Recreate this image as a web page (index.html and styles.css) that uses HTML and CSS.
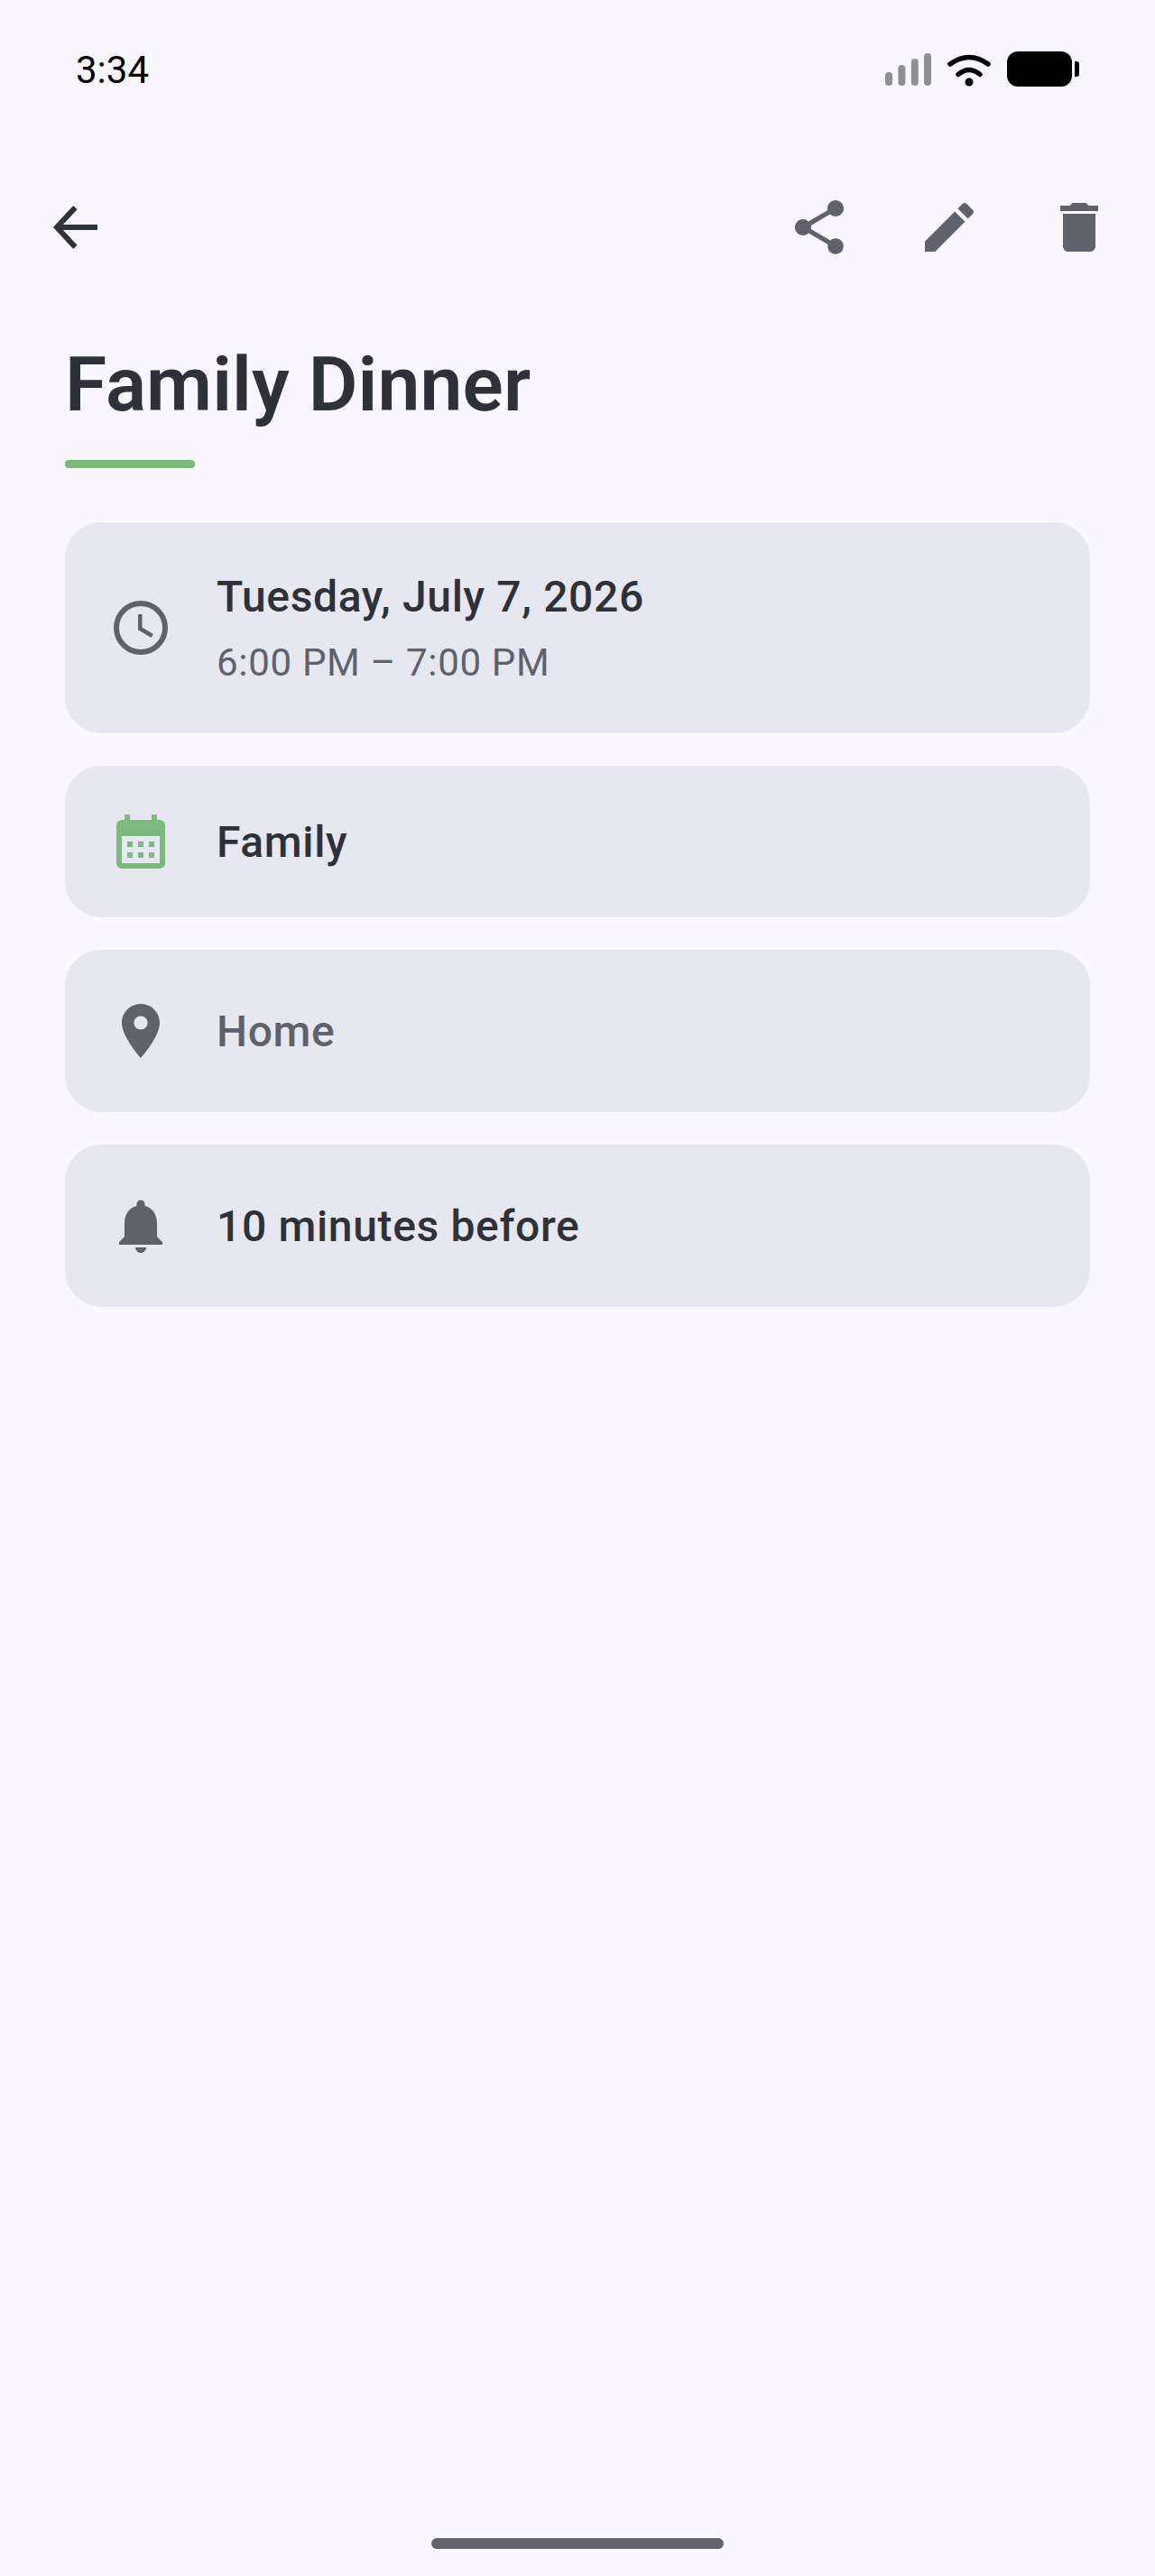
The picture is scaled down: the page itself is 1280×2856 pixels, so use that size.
FILE: index.html

```html
<!DOCTYPE html>
<html lang="en">
<head>
    <meta charset="UTF-8">
    <meta name="viewport" content="width=device-width, initial-scale=1.0">
    <title>Family Dinner</title>
    <link rel="stylesheet" href="styles.css">
</head>
<body>
    <div class="page">
        <div class="status-bar">
            <span class="status-time">3:34</span>
            <div class="status-icons">
                <svg width="51" height="36" viewBox="0 0 51 36" fill="#8e8e93">
                    <rect x="0" y="21" width="8" height="15" rx="4"/>
                    <rect x="14.4" y="13" width="8" height="23" rx="4"/>
                    <rect x="28.8" y="6" width="8" height="30" rx="4"/>
                    <rect x="43" y="0" width="8" height="36" rx="4"/>
                </svg>
                <svg width="48" height="37" viewBox="0 0 48 37">
                    <path d="M3 12Q24 -3 45 12M12 23.5Q24 13.500 36 23.500" fill="none" stroke="#000" stroke-width="5.500" stroke-linecap="round"/>
                    <circle cx="24" cy="32" r="4.500"/>
                </svg>
                <svg width="80" height="40" viewBox="0 0 80 40">
                    <rect x="0" y="0" width="72" height="39" rx="12"/>
                    <path d="M75 11h2a3 3 0 0 1 3 3v11a3 3 0 0 1-3 3h-2z"/>
                </svg>
            </div>
        </div>

        <div class="toolbar">
            <svg class="icon" viewBox="0 0 24 24">
                <path class="back-arrow" d="M20 12H5M11.800 4.700 5 12l6.800 7.300"/>
            </svg>
            <div class="toolbar-actions">
                <svg class="icon" viewBox="0 0 24 24">
                    <path d="M18 16.080c-.76 0-1.440.3-1.960.77L8.910 12.700c.05-.23.09-.46.09-.7s-.04-.47-.09-.7l7.050-4.110c.54.5 1.250.81 2.040.81 1.660 0 3-1.340 3-3s-1.340-3-3-3-3 1.340-3 3c0 .24.04.47.09.7L8.040 9.810C7.500 9.310 6.790 9 6 9c-1.660 0-3 1.340-3 3s1.340 3 3 3c.79 0 1.500-.31 2.040-.81l7.120 4.160c-.05.21-.08.43-.08.65 0 1.610 1.310 2.920 2.920 2.920s2.920-1.310 2.920-2.920-1.310-2.920-2.920-2.920z"/>
                </svg>
                <svg class="icon" viewBox="0 0 24 24">
                    <path d="M3 17.250V21h3.750L17.810 9.940l-3.750-3.750L3 17.250zM20.710 7.040c.39-.39.39-1.020 0-1.410l-2.340-2.340c-.39-.39-1.020-.39-1.410 0l-1.830 1.830 3.750 3.750 1.830-1.830z"/>
                </svg>
                <svg class="icon" viewBox="0 0 24 24">
                    <path d="M6 19c0 1.100.9 2 2 2h8c1.100 0 2-.9 2-2V7H6v12zM19 4h-3.500l-1-1h-5l-1 1H5v2h14V4z"/>
                </svg>
            </div>
        </div>

        <main class="content">
            <h1 class="event-title">Family Dinner</h1>
            <div class="title-rule"></div>

            <div class="card-list">
                <div class="card card-time">
                    <svg class="icon" viewBox="0 0 24 24">
                        <circle class="clock-ring" cx="12" cy="12" r="9"/>
                        <path class="clock-hands" d="M11.750 7v5.300l4.500 2.700"/>
                    </svg>
                    <div class="card-text">
                        <div class="card-title">Tuesday, July 7, 2026</div>
                        <div class="card-sub">6:00 PM – 7:00 PM</div>
                    </div>
                </div>

                <div class="card card-calendar">
                    <svg class="icon icon-green" viewBox="0 0 72 72">
                        <rect x="18" y="6" width="6" height="8"/>
                        <rect x="48" y="6" width="6" height="8"/>
                        <path fill-rule="evenodd" d="M15 12h42a6 6 0 0 1 6 6v42a6 6 0 0 1-6 6H15a6 6 0 0 1-6-6V18a6 6 0 0 1 6-6zM15 30v30h42V30zM21 36v6h6v-6zM33 36v6h6v-6zM45 36v6h6v-6zM21 48v6h6v-6zM33 48v6h6v-6zM45 48v6h6v-6z"/>
                    </svg>
                    <div class="card-title">Family</div>
                </div>

                <div class="card card-tall">
                    <svg class="icon" viewBox="0 0 24 24">
                        <path d="M12 2C8.130 2 5 5.130 5 9c0 5.250 7 13 7 13s7-7.750 7-13c0-3.870-3.130-7-7-7zm0 9.500c-1.380 0-2.500-1.120-2.500-2.500s1.120-2.500 2.500-2.500 2.500 1.120 2.500 2.500-1.120 2.500-2.500 2.500z"/>
                    </svg>
                    <div class="card-title muted">Home</div>
                </div>

                <div class="card card-tall">
                    <svg class="icon" viewBox="0 0 24 24">
                        <path d="M12 22c1.100 0 2-.9 2-2h-4c0 1.100.89 2 2 2zm6-6v-5c0-3.070-1.640-5.640-4.500-6.320V4c0-.83-.67-1.500-1.500-1.500s-1.500.67-1.500 1.500v.68C7.630 5.360 6 7.920 6 11v5l-2 2v1h16v-1l-2-2z"/>
                    </svg>
                    <div class="card-title">10 minutes before</div>
                </div>
            </div>
        </main>

        <div class="home-indicator"></div>
    </div>
</body>
</html>
```

FILE: styles.css

```css
body {
    font-family: Roboto, "Liberation Sans", sans-serif;
    background-color: #faf8fe;
    margin: 0;
    padding: 0;
}
.page {
    height: 2856px;
    display: flex;
    flex-direction: column;
    overflow: hidden;
}
.status-bar {
    height: 154px;
    padding: 0 84px;
    display: flex;
    align-items: center;
    justify-content: space-between;
    box-sizing: border-box;
}
.status-time {
    font-size: 42px;
    color: #000;
}
.status-icons {
    display: flex;
    align-items: center;
    gap: 18px;
}
.toolbar {
    margin-top: 62px;
    padding: 0 48px;
    display: flex;
    justify-content: space-between;
}
.toolbar-actions {
    display: flex;
    gap: 72px;
}
.icon {
    width: 72px;
    height: 72px;
    flex-shrink: 0;
    fill: #5f616c;
}
.icon-green {
    fill: #7cb97d;
}
.back-arrow {
    fill: none;
    stroke: #2f3138;
    stroke-width: 2;
}
.clock-ring, .clock-hands {
    fill: none;
    stroke: #5f616c;
}
.clock-ring {
    stroke-width: 2;
}
.clock-hands {
    stroke-width: 1.500;
}
.content {
    padding: 0 72px;
}
.event-title {
    margin: 84px 0 0;
    font-size: 84px;
    line-height: 110px;
    font-weight: 600;
    color: #2f3138;
    letter-spacing: 0.1px;
}
.title-rule {
    width: 144px;
    height: 9px;
    margin-top: 28px;
    border-radius: 4px;
    background-color: #7cb97d;
}
.card-list {
    margin-top: 60px;
    display: flex;
    flex-direction: column;
    gap: 36px;
}
.card {
    padding: 0 48px;
    display: flex;
    align-items: center;
    gap: 48px;
    border-radius: 40px;
    background-color: #e6e7f1;
}
.card-time {
    height: 234px;
}
.card-calendar {
    height: 168px;
}
.card-tall {
    height: 180px;
}
.card-title {
    font-size: 48px;
    font-weight: 500;
    letter-spacing: 0.65px;
    color: #2f3138;
}
.card-title.muted {
    color: #5f616c;
}
.card-sub {
    margin-top: 20px;
    font-size: 42px;
    letter-spacing: 0.7px;
    color: #5f616c;
}
.home-indicator {
    width: 324px;
    height: 12px;
    margin: auto auto 30px;
    border-radius: 6px;
    background-color: #63646b;
}
```
